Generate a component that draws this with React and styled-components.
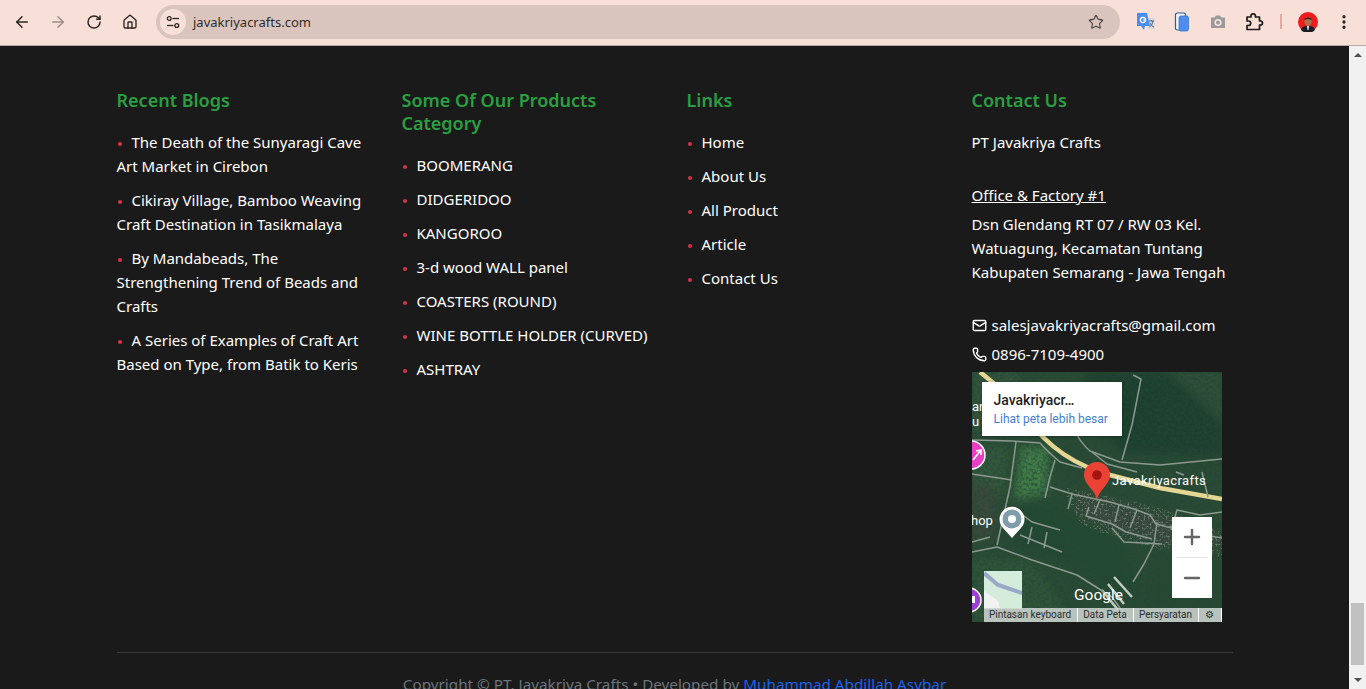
import React from 'react';
import styled, {createGlobalStyle} from 'styled-components';
import {ArrowLeft, ArrowRight, RotateCw, House, Star, EllipsisVertical, Mail, Phone, Plus, Minus} from 'lucide-react';

const GlobalStyle = createGlobalStyle`
  html, body {
    margin: 0;
    height: 100%;
    overflow: hidden;
    background: #1a1a1a;
  }
  * {
    box-sizing: border-box;
  }
`

const Window = styled.div`
  display: flex;
  flex-direction: column;
  height: 689px;
  font-family: "Noto Sans", "Open Sans", sans-serif;
`

const Toolbar = styled.header`
  display: flex;
  align-items: center;
  flex: 0 0 46px;
  height: 46px;
  padding: 0 0 2px 4px;
  background: #f8e0d8;
  border-bottom: 1px solid #b9aaa4;
`

const NavButton = styled.button`
  display: flex;
  align-items: center;
  justify-content: center;
  width: 36px;
  height: 36px;
  padding: 0;
  border: 0;
  background: none;
  color: ${({muted}) => (muted ? '#9a8f8b' : '#2b2523')};
`

const UrlBar = styled.div`
  display: flex;
  align-items: center;
  width: 964px;
  height: 34px;
  margin-left: 8px;
  padding: 0 16px 0 4px;
  border-radius: 17px;
  background: #d9c5bd;
`

const TuneChip = styled.span`
  display: flex;
  align-items: center;
  justify-content: center;
  width: 26px;
  height: 26px;
  border-radius: 50%;
  background: #f8e0d8;
  color: #2b2523;
`

const UrlText = styled.span`
  flex: 1;
  margin-left: 7px;
  font-size: 13px;
  color: #332c2a;
`

const Extensions = styled.div`
  display: flex;
  align-items: center;
  margin-left: 8px;
`

const Divider = styled.span`
  width: 2px;
  height: 15px;
  margin: 0 8px 0 8px;
  background: #e4a99a;
`

const Body = styled.div`
  display: flex;
  flex: 1;
  min-height: 0;
`

const Page = styled.main`
  flex: 1;
  min-width: 0;
  overflow: hidden;
  background: #1a1a1a;
`

const Container = styled.div`
  width: 1140px;
  margin: 0 auto;
  padding: 43px 12px 0 12px;
`

const Columns = styled.div`
  display: grid;
  grid-template-columns: repeat(4, 285px);
  margin: 0 -12px;
`

const Column = styled.section`
  padding: 0 12px;
`

const Heading = styled.h2`
  margin: 0 0 18px 0;
  font-size: 18px;
  line-height: 23px;
  font-weight: 600;
  color: #2a9f41;
`

const List = styled.ul`
  display: flex;
  flex-direction: column;
  gap: 10px;
  margin: 0;
  padding: 0;
  list-style: none;
`

const Item = styled.li`
  font-size: 15px;
  line-height: 24px;
  color: #fff;
  &::before {
    content: '';
    display: inline-block;
    width: 4px;
    height: 4px;
    margin: 0 10px 2px 1px;
    border-radius: 50%;
    background: #d9324a;
  }
`

const Line = styled.p`
  margin: ${({top}) => top || 0}px 0 0 0;
  font-size: 15px;
  line-height: 24px;
  color: #fff;
`

const Underlined = styled(Line)`
  text-decoration: underline;
`

const ContactLine = styled(Line)`
  display: flex;
  align-items: center;
  gap: 5px;
`

const MapFrame = styled.div`
  position: relative;
  width: 250px;
  height: 250px;
  margin-top: 6px;
  overflow: hidden;
  background: #23452f;
  font-family: Roboto, "Liberation Sans", sans-serif;
`

const InfoCard = styled.div`
  position: absolute;
  top: 10px;
  left: 10px;
  width: 140px;
  height: 54px;
  padding: 10px 0 0 12px;
  background: #fff;
  box-shadow: 0 1px 3px rgba(0, 0, 0, 0.3);
`

const InfoTitle = styled.div`
  font-size: 14px;
  line-height: 17px;
  font-weight: 500;
  color: #1f1f1f;
`

const InfoLink = styled.div`
  margin-top: 3px;
  font-size: 12px;
  line-height: 14px;
  color: #3f7fd6;
`

const ZoomBox = styled.div`
  position: absolute;
  top: 145px;
  left: 200px;
  display: flex;
  flex-direction: column;
  width: 40px;
  height: 81px;
  background: #fff;
  color: #666;
`

const ZoomButton = styled.div`
  display: flex;
  align-items: center;
  justify-content: center;
  flex: 1;
`

const ZoomRule = styled.span`
  height: 1px;
  margin: 0 4px;
  background: #e2e2e2;
`

const Thumbnail = styled.div`
  position: absolute;
  top: 199px;
  left: 12px;
  width: 38px;
  height: 38px;
  overflow: hidden;
  background: #d3ecdc;
`

const AttributionBar = styled.div`
  position: absolute;
  top: 236px;
  left: 12px;
  right: 0;
  display: flex;
  align-items: center;
  height: 14px;
  background: rgba(205, 212, 208, 0.88);
  font-size: 10px;
  line-height: 14px;
  color: #2b2b2b;
  white-space: nowrap;
`

const AttributionItem = styled.span`
  flex: 0 0 ${({width}) => width}px;
  text-align: center;
  border-right: 1px solid #fff;
`

const Rule = styled.hr`
  margin: 30px 0 0 0;
  border: 0;
  border-top: 1px solid #3a3a3a;
`

const Copyright = styled.p`
  margin: 19px 0 0 0;
  font-size: 15.25px;
  line-height: 24px;
  text-align: center;
  color: #6c757d;
`

const CopyrightLink = styled.span`
  color: #1a63ea;
`

const Scrollbar = styled.aside`
  display: flex;
  flex-direction: column;
  align-items: center;
  flex: 0 0 17px;
  background: #f1f1f1;
`

const ScrollTrack = styled.div`
  flex: 1;
  width: 100%;
  padding: 0 2px;
`

const ScrollThumb = styled.div`
  height: 62px;
  margin-top: 539px;
  background: #c1c1c1;
`

const ScrollArrow = styled.div`
  width: 0;
  height: 0;
  margin: 7px 0;
  border-left: 4px solid transparent;
  border-right: 4px solid transparent;
  ${({down}) => (down ? 'border-top: 4px solid #505050;' : 'border-bottom: 4px solid #505050;')}
`

const blogs = [
  'The Death of the Sunyaragi Cave Art Market in Cirebon',
  'Cikiray Village, Bamboo Weaving Craft Destination in Tasikmalaya',
  'By Mandabeads, The Strengthening Trend of Beads and Crafts',
  'A Series of Examples of Craft Art Based on Type, from Batik to Keris',
];
const products = ['BOOMERANG', 'DIDGERIDOO', 'KANGOROO', '3-d wood WALL panel', 'COASTERS (ROUND)', 'WINE BOTTLE HOLDER (CURVED)', 'ASHTRAY'];
const links = ['Home', 'About Us', 'All Product', 'Article', 'Contact Us'];

// map roads, in the 250x250 space of the map
const minorRoads = [
  'M0 68 L40 69 L68 71 Q76 80 88 90 L110 96',
  'M105 63 Q110 72 118 79 L148 90 L188 93 L250 87',
  'M161 3 L169 7 L160 53 L150 88',
  'M44 70 L38 115 L25 173',
  'M0 180 L25 175 L60 188 L105 203 L140 225 L158 250',
  'M78 115 L100 122 L138 130 L162 137 L178 143 L184 152 L215 160 L250 166',
  'M83 88 L78 105 L73 126',
  'M185 150 L182 172 L172 192 L161 210',
  'M117 135 L114 144 L140 152 L154 160 L180 167',
  'M128 128 L122 142 M147 133 L143 150 M165 138 L158 156 M100 122 L96 137',
  'M0 102 L40 108',
  'M40 135 L60 150 L88 158 M48 163 L90 180 M60 155 L56 172 M75 160 L72 176',
  'M250 140 L228 143 L205 138 L199 158',
  'M140 156 L152 170 L190 172',
  'M0 170 L18 165',
  'M204 100 L212 103 M230 100 L236 125',
  'M120 80 L135 92 L165 100',
];

const MapArt = () => (
  <svg width="250" height="250" viewBox="0 0 250 250" style={{display: 'block'}}>
    <defs>
      <filter id="mottle" x="0" y="0" width="100%" height="100%">
        <feTurbulence type="fractalNoise" baseFrequency="0.35" numOctaves="3" seed="7" />
        <feColorMatrix values="0 0 0 0 0.02  0 0 0 0 0.06  0 0 0 0 0.04  2.6 0 0 0 -1.05" />
      </filter>
      <filter id="speckle" x="0" y="0" width="100%" height="100%">
        <feTurbulence type="fractalNoise" baseFrequency="0.5" numOctaves="2" seed="3" />
        <feColorMatrix values="0 0 0 0 0.62  0 0 0 0 0.66  0 0 0 0 0.58  0 2.8 0 0 -1.4" />
      </filter>
      <filter id="soft"><feGaussianBlur stdDeviation="4" /></filter>
      <clipPath id="village">
        <path d="M90 115 L185 135 L250 160 V185 L190 178 L110 155 Z" />
      </clipPath>
    </defs>
    <rect width="250" height="250" fill="#294b34" />
    <g filter="url(#soft)">
      <path d="M115 0 H250 V85 L150 80 L108 40 Z" fill="#1c3f2d" />
      <path d="M195 0 H250 V50 Z" fill="#2d5039" />
      <path d="M0 0 H45 L60 60 H0 Z" fill="#30553a" />
      <path d="M48 75 H78 L74 122 L42 128 Z" fill="#3f7b46" />
      <path d="M0 75 H38 L30 125 H0 Z" fill="#31593a" />
      <path d="M70 130 L150 165 L170 230 L100 195 L40 172 L50 130 Z" fill="#214a30" />
      <path d="M100 118 L185 140 L250 165 V185 L190 172 L112 148 Z" fill="#3b4a3d" />
      <path d="M180 180 L250 175 V250 H170 Z" fill="#274a33" />
      <path d="M0 185 L60 190 L100 250 H0 Z" fill="#2e5438" />
      <path d="M0 110 L25 115 L22 165 L0 170 Z" fill="#3b4a3b" />
    </g>
    <rect width="250" height="250" filter="url(#mottle)" opacity="0.75" />
    <g clipPath="url(#village)">
      <rect width="250" height="250" filter="url(#speckle)" opacity="0.5" />
    </g>
    <path d="M142 205 L160 225 M136 212 L152 232 M130 218 L146 238" stroke="#c2cbc0" strokeWidth="2.5" fill="none" />
    <path d="M8 0 L30 18 L55 48 L72 66 Q90 84 115 95 L138 103 L188 116 L250 127" stroke="#e6d694" strokeWidth="4.5" fill="none" />
    {minorRoads.map((d) => (
      <path key={d} d={d} stroke="#8c998f" strokeWidth="1.5" fill="none" strokeLinejoin="round" />
    ))}
    <circle cx="-1" cy="83" r="14" fill="#e83fc4" stroke="#fff" strokeWidth="1.5" />
    <path d="M1 88 L9 78 M4 79 L9 78 L9 83" stroke="#fff" strokeWidth="1.6" fill="none" />
    <circle cx="-3" cy="228" r="12" fill="#9a3fd8" stroke="#fff" strokeWidth="1.5" />
    <rect x="-3" y="224" width="6" height="7" fill="#fff" />
    <path d="M40 166 L31 156 A12.5 12.5 0 1 1 49 156 Z" fill="#fff" />
    <circle cx="40" cy="147" r="9.5" fill="#7f9cab" />
    <circle cx="40" cy="147" r="4" fill="#fff" />
    <path d="M125 127 C122 117 112 112 112 103 A13 13 0 1 1 138 103 C138 112 128 117 125 127 Z" fill="#ea4335" />
    <circle cx="125" cy="103" r="4.8" fill="#a5140f" />
    <text x="140" y="113" fontSize="13" letterSpacing="0.4" fill="#fff">Javakriyacrafts</text>
    <text x="-1" y="153" fontSize="13" fill="#fff">hop</text>
    <text x="0" y="39" fontSize="13" fill="#fff">ar</text>
    <text x="0" y="54" fontSize="13" fill="#fff">u</text>
    <text x="102" y="228" fontSize="15.5" fill="#fff">Google</text>
  </svg>
);

const Avatar = () => (
  <svg width="20" height="20" viewBox="0 0 20 20">
    <circle cx="10" cy="10" r="10" fill="#ee1c1c" />
    <path d="M3 18 C4 14 7 14 10 14 C13 14 16 14 17 18 A10 10 0 0 1 3 18 Z" fill="#1c1c24" />
    <path d="M9 14 H11 L10.5 18 H9.5 Z" fill="#eee" />
    <ellipse cx="10" cy="9.5" rx="3.6" ry="4.6" fill="#a8704e" />
    <path d="M6.4 8 C6.4 4.5 13.6 4.5 13.6 8 C12 6.5 8 6.5 6.4 8 Z" fill="#1c1412" />
  </svg>
);

const TranslateIcon = () => (
  <svg width="20" height="20" viewBox="0 0 20 20">
    <path d="M12 6 H19 V17 H12 Z" fill="#d8d8e0" />
    <path d="M13 9 H18 M15.5 8 V9 M17 9 C16.5 12 15 14 13.5 15 M14 11 C15 13 16.5 14.5 18 15" stroke="#5d6470" strokeWidth="1" fill="none" />
    <path d="M1 1 H11 L14 14 H9 L8 18 L5 14 H1 Z" fill="#4a8cf0" />
    <circle cx="7" cy="8" r="2.6" fill="none" stroke="#fff" strokeWidth="1.3" />
    <path d="M7 8 H9.6" stroke="#fff" strokeWidth="1.2" />
  </svg>
);

const PhonesIcon = () => (
  <svg width="20" height="20" viewBox="0 0 20 20">
    <rect x="3.5" y="1" width="10" height="17" rx="1.8" fill="#f4f6fb" stroke="#2f5d94" strokeWidth="1.2" />
    <rect x="7" y="4" width="9.5" height="15" rx="1.8" fill="#4d8ef0" stroke="#3d74c8" strokeWidth="0.8" />
  </svg>
);

const CameraIcon = () => (
  <svg width="18" height="18" viewBox="0 0 18 18">
    <path d="M2 4.5 H5.5 L7 2.5 H11 L12.5 4.5 H16 V15 H2 Z" fill="#9b9b9b" />
    <circle cx="9" cy="9.5" r="3.6" fill="#f3e5df" />
    <circle cx="9" cy="9.5" r="2" fill="#9b9b9b" />
  </svg>
);

const PuzzleIcon = () => (
  <svg width="20" height="20" viewBox="0 0 20 20" fill="none" stroke="#1d1a19" strokeWidth="1.7" strokeLinejoin="round">
    <path d="M3 5 H7 V4 A2 2 0 0 1 11.4 4 V5 H15.5 V9 H16.5 A2 2 0 0 1 16.5 13 H15.5 V17.5 H3 V13.5 H4.5 A2 2 0 0 0 4.5 9 H3 Z" />
  </svg>
);

const TuneIcon = () => (
  <svg width="14" height="14" viewBox="0 0 14 14" fill="none" stroke="currentColor" strokeWidth="1.3">
    <circle cx="3.2" cy="3.5" r="1.9" />
    <path d="M6.5 3.5 H13" />
    <circle cx="10.8" cy="10.5" r="1.9" />
    <path d="M1 10.5 H7.5" />
  </svg>
);

const App = () => (
  <Window>
    <GlobalStyle />
    <Toolbar>
      <NavButton><ArrowLeft size={18} strokeWidth={2} /></NavButton>
      <NavButton muted><ArrowRight size={18} strokeWidth={2} /></NavButton>
      <NavButton><RotateCw size={16} strokeWidth={2.2} /></NavButton>
      <NavButton><House size={16} strokeWidth={2} /></NavButton>
      <UrlBar>
        <TuneChip><TuneIcon /></TuneChip>
        <UrlText>javakriyacrafts.com</UrlText>
        <Star size={16} strokeWidth={1.7} color="#4c4442" />
      </UrlBar>
      <Extensions>
        <NavButton><TranslateIcon /></NavButton>
        <NavButton><PhonesIcon /></NavButton>
        <NavButton><CameraIcon /></NavButton>
        <NavButton><PuzzleIcon /></NavButton>
        <Divider />
        <NavButton><Avatar /></NavButton>
        <NavButton><EllipsisVertical size={18} strokeWidth={2.4} /></NavButton>
      </Extensions>
    </Toolbar>
    <Body>
      <Page>
        <Container>
          <Columns>
            <Column>
              <Heading>Recent Blogs</Heading>
              <List>
                {blogs.map((text) => <Item key={text}>{text}</Item>)}
              </List>
            </Column>
            <Column>
              <Heading>Some Of Our Products Category</Heading>
              <List>
                {products.map((text) => <Item key={text}>{text}</Item>)}
              </List>
            </Column>
            <Column>
              <Heading>Links</Heading>
              <List>
                {links.map((text) => <Item key={text}>{text}</Item>)}
              </List>
            </Column>
            <Column>
              <Heading>Contact Us</Heading>
              <Line>PT Javakriya Crafts</Line>
              <Underlined top={29}>Office &amp; Factory #1</Underlined>
              <Line top={5}>Dsn Glendang RT 07 / RW 03 Kel. Watuagung, Kecamatan Tuntang Kabupaten Semarang - Jawa Tengah</Line>
              <ContactLine top={29}><Mail size={15} strokeWidth={2.2} />salesjavakriyacrafts@gmail.com</ContactLine>
              <ContactLine top={5}><Phone size={15} strokeWidth={2.2} />0896-7109-4900</ContactLine>
              <MapFrame>
                <MapArt />
                <InfoCard>
                  <InfoTitle>Javakriyacr…</InfoTitle>
                  <InfoLink>Lihat peta lebih besar</InfoLink>
                </InfoCard>
                <ZoomBox>
                  <ZoomButton><Plus size={24} strokeWidth={2.4} /></ZoomButton>
                  <ZoomRule />
                  <ZoomButton><Minus size={24} strokeWidth={2.4} /></ZoomButton>
                </ZoomBox>
                <Thumbnail>
                  <svg width="38" height="38" viewBox="0 0 38 38">
                    <rect width="38" height="38" fill="#d3ecdc" />
                    <path d="M0 20 L14 30 L16 38 H0 Z" fill="#f2f3f1" />
                    <path d="M0 2 L14 14 L38 22" stroke="#9aa8c8" strokeWidth="4" fill="none" />
                  </svg>
                </Thumbnail>
                <AttributionBar>
                  <AttributionItem width={94}>Pintasan keyboard</AttributionItem>
                  <AttributionItem width={56}>Data Peta</AttributionItem>
                  <AttributionItem width={65}>Persyaratan</AttributionItem>
                  <AttributionItem width={23}>⚙</AttributionItem>
                </AttributionBar>
              </MapFrame>
            </Column>
          </Columns>
          <Rule />
          <Copyright>
            Copyright © PT. Javakriya Crafts • Developed by <CopyrightLink>Muhammad Abdillah Asybar</CopyrightLink>
          </Copyright>
        </Container>
      </Page>
      <Scrollbar>
        <ScrollArrow />
        <ScrollTrack><ScrollThumb /></ScrollTrack>
        <ScrollArrow down />
      </Scrollbar>
    </Body>
  </Window>
);

export default App;
